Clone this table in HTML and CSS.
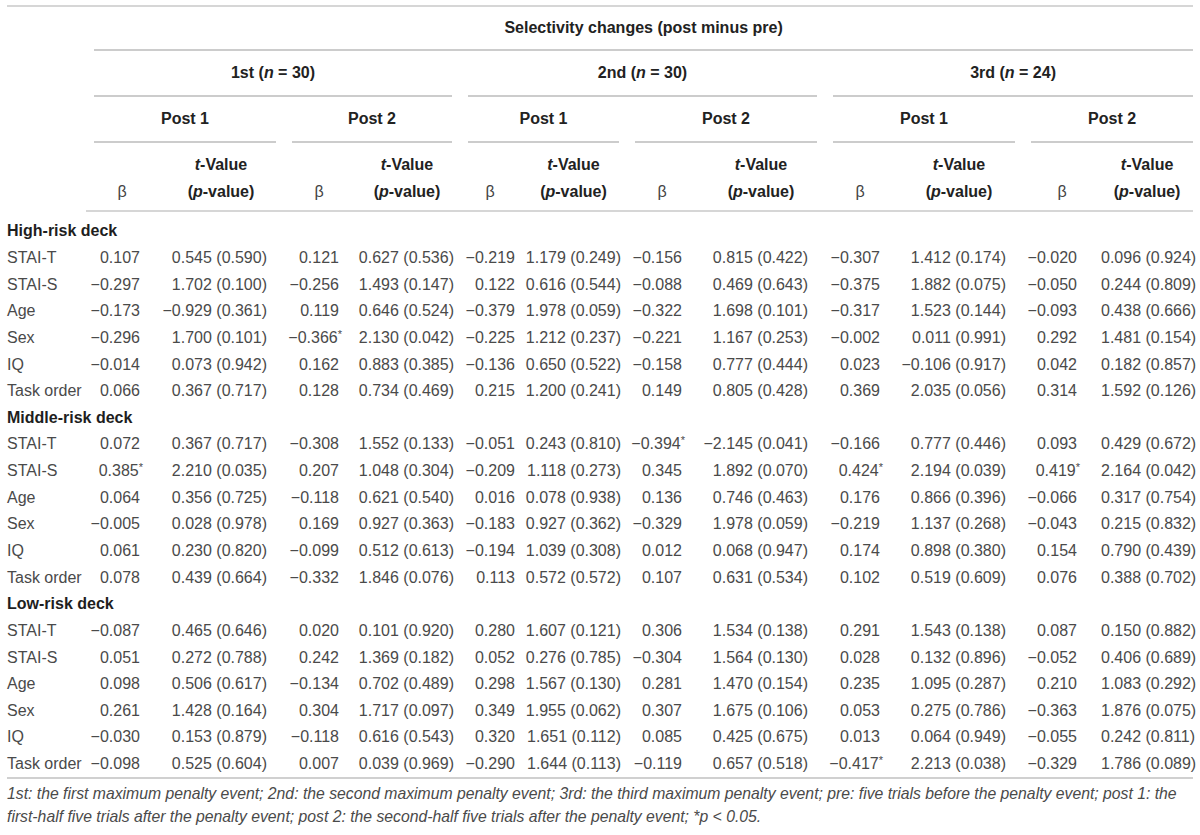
FILE: index.html
```html
<!DOCTYPE html>
<html lang="en">
<head>
<meta charset="utf-8">
<title>Selectivity changes</title>
<link rel="stylesheet" href="styles.css">
</head>
<body>
<div class="page">
  <table class="data">
    <colgroup>
      <col class="c-stub">
      <col class="c-b1"><col class="c-t1"><col class="c-b2"><col class="c-t2">
      <col class="c-b3"><col class="c-t3"><col class="c-b4"><col class="c-t4">
      <col class="c-b5"><col class="c-t5"><col class="c-b6"><col class="c-t6">
    </colgroup>
    <thead>
      <tr class="h1">
        <th class="stub" rowspan="4"></th>
        <th colspan="12"><div class="rule last">Selectivity changes (post minus pre)</div></th>
      </tr>
      <tr class="h2">
        <th colspan="4"><div class="rule first">1st (<i>n</i> = 30)</div></th>
        <th colspan="4"><div class="rule">2nd (<i>n</i> = 30)</div></th>
        <th colspan="4"><div class="rule last">3rd (<i>n</i> = 24)</div></th>
      </tr>
      <tr class="h3">
        <th colspan="2"><div class="rule first">Post 1</div></th>
        <th colspan="2"><div class="rule">Post 2</div></th>
        <th colspan="2"><div class="rule">Post 1</div></th>
        <th colspan="2"><div class="rule">Post 2</div></th>
        <th colspan="2"><div class="rule">Post 1</div></th>
        <th colspan="2"><div class="rule last">Post 2</div></th>
      </tr>
      <tr class="h4">
        <th class="beta">β</th><th class="tv"><i>t</i>-Value<br>(<i>p</i>-value)</th>
        <th class="beta">β</th><th class="tv"><i>t</i>-Value<br>(<i>p</i>-value)</th>
        <th class="beta">β</th><th class="tv"><i>t</i>-Value<br>(<i>p</i>-value)</th>
        <th class="beta">β</th><th class="tv"><i>t</i>-Value<br>(<i>p</i>-value)</th>
        <th class="beta">β</th><th class="tv"><i>t</i>-Value<br>(<i>p</i>-value)</th>
        <th class="beta">β</th><th class="tv"><i>t</i>-Value<br>(<i>p</i>-value)</th>
      </tr>
    </thead>
    <tbody>
      <tr class="group first-group"><td colspan="13">High-risk deck</td></tr>
      <tr><td>STAI-T</td><td>0.107</td><td>0.545 (0.590)</td><td>0.121</td><td>0.627 (0.536)</td><td>−0.219</td><td>1.179 (0.249)</td><td>−0.156</td><td>0.815 (0.422)</td><td>−0.307</td><td>1.412 (0.174)</td><td>−0.020</td><td>0.096 (0.924)</td></tr>
      <tr><td>STAI-S</td><td>−0.297</td><td>1.702 (0.100)</td><td>−0.256</td><td>1.493 (0.147)</td><td>0.122</td><td>0.616 (0.544)</td><td>−0.088</td><td>0.469 (0.643)</td><td>−0.375</td><td>1.882 (0.075)</td><td>−0.050</td><td>0.244 (0.809)</td></tr>
      <tr><td>Age</td><td>−0.173</td><td>−0.929 (0.361)</td><td>0.119</td><td>0.646 (0.524)</td><td>−0.379</td><td>1.978 (0.059)</td><td>−0.322</td><td>1.698 (0.101)</td><td>−0.317</td><td>1.523 (0.144)</td><td>−0.093</td><td>0.438 (0.666)</td></tr>
      <tr><td>Sex</td><td>−0.296</td><td>1.700 (0.101)</td><td>−0.366<sup class="sig">*</sup></td><td>2.130 (0.042)</td><td>−0.225</td><td>1.212 (0.237)</td><td>−0.221</td><td>1.167 (0.253)</td><td>−0.002</td><td>0.011 (0.991)</td><td>0.292</td><td>1.481 (0.154)</td></tr>
      <tr><td>IQ</td><td>−0.014</td><td>0.073 (0.942)</td><td>0.162</td><td>0.883 (0.385)</td><td>−0.136</td><td>0.650 (0.522)</td><td>−0.158</td><td>0.777 (0.444)</td><td>0.023</td><td>−0.106 (0.917)</td><td>0.042</td><td>0.182 (0.857)</td></tr>
      <tr><td>Task order</td><td>0.066</td><td>0.367 (0.717)</td><td>0.128</td><td>0.734 (0.469)</td><td>0.215</td><td>1.200 (0.241)</td><td>0.149</td><td>0.805 (0.428)</td><td>0.369</td><td>2.035 (0.056)</td><td>0.314</td><td>1.592 (0.126)</td></tr>
      <tr class="group"><td colspan="13">Middle-risk deck</td></tr>
      <tr><td>STAI-T</td><td>0.072</td><td>0.367 (0.717)</td><td>−0.308</td><td>1.552 (0.133)</td><td>−0.051</td><td>0.243 (0.810)</td><td>−0.394<sup class="sig">*</sup></td><td>−2.145 (0.041)</td><td>−0.166</td><td>0.777 (0.446)</td><td>0.093</td><td>0.429 (0.672)</td></tr>
      <tr><td>STAI-S</td><td>0.385<sup class="sig">*</sup></td><td>2.210 (0.035)</td><td>0.207</td><td>1.048 (0.304)</td><td>−0.209</td><td>1.118 (0.273)</td><td>0.345</td><td>1.892 (0.070)</td><td>0.424<sup class="sig">*</sup></td><td>2.194 (0.039)</td><td>0.419<sup class="sig">*</sup></td><td>2.164 (0.042)</td></tr>
      <tr><td>Age</td><td>0.064</td><td>0.356 (0.725)</td><td>−0.118</td><td>0.621 (0.540)</td><td>0.016</td><td>0.078 (0.938)</td><td>0.136</td><td>0.746 (0.463)</td><td>0.176</td><td>0.866 (0.396)</td><td>−0.066</td><td>0.317 (0.754)</td></tr>
      <tr><td>Sex</td><td>−0.005</td><td>0.028 (0.978)</td><td>0.169</td><td>0.927 (0.363)</td><td>−0.183</td><td>0.927 (0.362)</td><td>−0.329</td><td>1.978 (0.059)</td><td>−0.219</td><td>1.137 (0.268)</td><td>−0.043</td><td>0.215 (0.832)</td></tr>
      <tr><td>IQ</td><td>0.061</td><td>0.230 (0.820)</td><td>−0.099</td><td>0.512 (0.613)</td><td>−0.194</td><td>1.039 (0.308)</td><td>0.012</td><td>0.068 (0.947)</td><td>0.174</td><td>0.898 (0.380)</td><td>0.154</td><td>0.790 (0.439)</td></tr>
      <tr><td>Task order</td><td>0.078</td><td>0.439 (0.664)</td><td>−0.332</td><td>1.846 (0.076)</td><td>0.113</td><td>0.572 (0.572)</td><td>0.107</td><td>0.631 (0.534)</td><td>0.102</td><td>0.519 (0.609)</td><td>0.076</td><td>0.388 (0.702)</td></tr>
      <tr class="group"><td colspan="13">Low-risk deck</td></tr>
      <tr><td>STAI-T</td><td>−0.087</td><td>0.465 (0.646)</td><td>0.020</td><td>0.101 (0.920)</td><td>0.280</td><td>1.607 (0.121)</td><td>0.306</td><td>1.534 (0.138)</td><td>0.291</td><td>1.543 (0.138)</td><td>0.087</td><td>0.150 (0.882)</td></tr>
      <tr><td>STAI-S</td><td>0.051</td><td>0.272 (0.788)</td><td>0.242</td><td>1.369 (0.182)</td><td>0.052</td><td>0.276 (0.785)</td><td>−0.304</td><td>1.564 (0.130)</td><td>0.028</td><td>0.132 (0.896)</td><td>−0.052</td><td>0.406 (0.689)</td></tr>
      <tr><td>Age</td><td>0.098</td><td>0.506 (0.617)</td><td>−0.134</td><td>0.702 (0.489)</td><td>0.298</td><td>1.567 (0.130)</td><td>0.281</td><td>1.470 (0.154)</td><td>0.235</td><td>1.095 (0.287)</td><td>0.210</td><td>1.083 (0.292)</td></tr>
      <tr><td>Sex</td><td>0.261</td><td>1.428 (0.164)</td><td>0.304</td><td>1.717 (0.097)</td><td>0.349</td><td>1.955 (0.062)</td><td>0.307</td><td>1.675 (0.106)</td><td>0.053</td><td>0.275 (0.786)</td><td>−0.363</td><td>1.876 (0.075)</td></tr>
      <tr><td>IQ</td><td>−0.030</td><td>0.153 (0.879)</td><td>−0.118</td><td>0.616 (0.543)</td><td>0.320</td><td>1.651 (0.112)</td><td>0.085</td><td>0.425 (0.675)</td><td>0.013</td><td>0.064 (0.949)</td><td>−0.055</td><td>0.242 (0.811)</td></tr>
      <tr><td>Task order</td><td>−0.098</td><td>0.525 (0.604)</td><td>0.007</td><td>0.039 (0.969)</td><td>−0.290</td><td>1.644 (0.113)</td><td>−0.119</td><td>0.657 (0.518)</td><td>−0.417<sup class="sig">*</sup></td><td>2.213 (0.038)</td><td>−0.329</td><td>1.786 (0.089)</td></tr>
    </tbody>
  </table>
  <p class="note">1st: the first maximum penalty event; 2nd: the second maximum penalty event; 3rd: the third maximum penalty event; pre: five trials before the penalty event; post 1: the first-half five trials after the penalty event; post 2: the second-half five trials after the penalty event; *p &lt; 0.05.</p>
</div>
</body>
</html>
```

FILE: styles.css
```css
html, body {
  margin: 0;
  padding: 0;
  background: #ffffff;
}

.page {
  padding: 5px 7px 0 7px;
  font-family: "Liberation Sans", Arial, sans-serif;
  color: #4a4a4a;
}

.data {
  width: 1186px;
  table-layout: fixed;
  border-collapse: collapse;
  border-top: 2px solid #d6d6d6;
  border-bottom: 2px solid #d0d0d0;
  font-size: 16px;
}

.c-stub { width: 79px; }
.c-b1 { width: 72px; }
.c-t1 { width: 126px; }
.c-b2 { width: 70px; }
.c-t2 { width: 106px; }
.c-b3 { width: 60px; }
.c-t3 { width: 107px; }
.c-b4 { width: 70px; }
.c-t4 { width: 128px; }
.c-b5 { width: 70px; }
.c-t5 { width: 128px; }
.c-b6 { width: 78px; }
.c-t6 { width: 92px; }

th {
  padding: 0;
  font-weight: bold;
  color: #222222;
  text-align: center;
  line-height: 27px;
  white-space: nowrap;
}

.rule {
  margin: 0 8px;
  border-bottom: 2px solid #cccccc;
}
.rule.first { margin-left: 8px; }
.rule.last { margin-right: 0; }

.h1 .rule { padding: 7px 0 8px; }
.h2 .rule { padding: 7.5px 0 9.5px; }
.h3 .rule { padding: 7.5px 0 9.5px; }

.h4 th {
  padding: 7.5px 0 5.5px;
  border-bottom: 2px solid #d6d6d6;
  vertical-align: bottom;
}
.h4 th.beta {
  font-weight: normal;
  color: #444444;
}

tbody td {
  height: 26.65px;
  padding: 0;
  line-height: 20px;
  text-align: right;
  white-space: nowrap;
  vertical-align: middle;
}

tbody td:nth-child(1) { text-align: left; }
tbody td:nth-child(2) { padding-right: 18px; }
tbody td:nth-child(3) { padding-right: 17px; }
tbody td:nth-child(4) { padding-right: 15px; }
tbody td:nth-child(5) { padding-right: 6px; }
tbody td:nth-child(6) { padding-right: 5px; }
tbody td:nth-child(7) { padding-right: 6px; }
tbody td:nth-child(8) { padding-right: 15px; }
tbody td:nth-child(9) { padding-right: 17px; }
tbody td:nth-child(10) { padding-right: 15px; }
tbody td:nth-child(11) { padding-right: 17px; }
tbody td:nth-child(12) { padding-right: 24px; }
tbody td:nth-child(13) { padding-right: 1px; }

tbody tr.group td {
  text-align: left;
  font-weight: bold;
  color: #1e1e1e;
  padding-right: 0;
}
tbody tr.first-group td {
  padding-top: 6px;
}

.sig {
  font-size: 11px;
  line-height: 0;
  vertical-align: 5px;
  margin-right: -3px;
}

.note {
  margin: 3px 0 0 0;
  font-size: 15.75px;
  line-height: 23px;
  font-style: italic;
  color: #4a4a4a;
}
```
